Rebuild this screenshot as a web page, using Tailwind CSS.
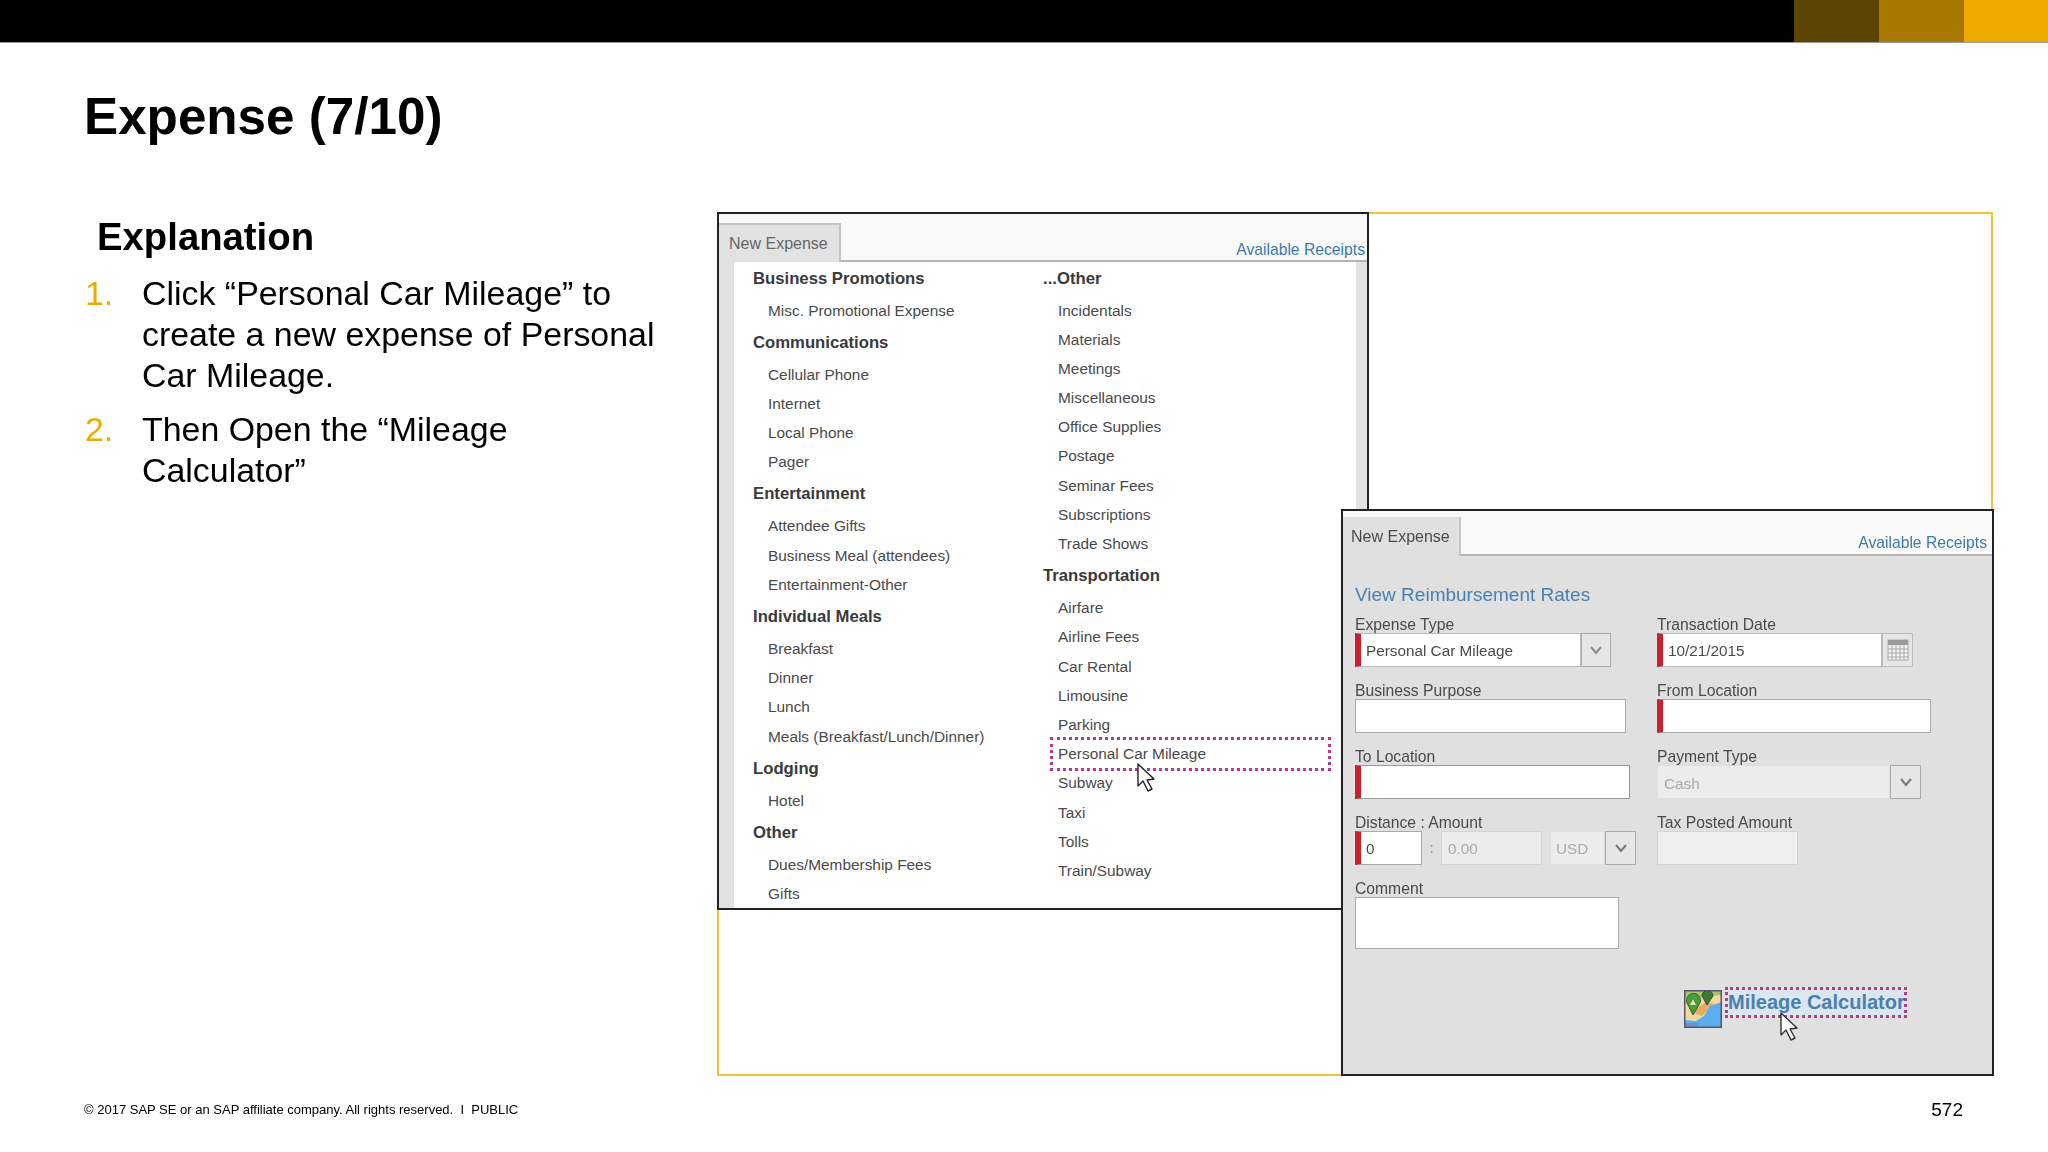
<!DOCTYPE html>
<html lang="en">
<head>
  <meta charset="UTF-8" />
  <title>Expense (7/10)</title>
  <script src="https://cdn.jsdelivr.net/npm/@tailwindcss/browser@4"></script>
</head>
<body class="w-[2048px] h-[1152px] overflow-hidden bg-white text-black font-['Liberation_Sans',Arial,sans-serif]">
  <div class="relative flex flex-col h-full blur-[0.4px]">
    <!-- top colour bar -->
    <div class="flex h-[43px] shrink-0 border-b border-[#999]">
      <div class="flex-1 bg-black"></div>
      <div class="w-[85px] bg-[#5c4500]"></div>
      <div class="w-[85px] bg-[#a87800]"></div>
      <div class="w-[84px] bg-[#f0ab00]"></div>
    </div>

    <h1 class="mt-[46px] pl-[84px] text-[51.2px] leading-[56px] font-bold">Expense (7/10)</h1>

    <h2 class="mt-[70px] pl-[97px] text-[38.3px] leading-[44px] font-bold">Explanation</h2>

    <ol class="mt-[14px] pl-[85px] w-[680px] text-[33.9px] leading-[41px] flex flex-col gap-[13px]">
      <li class="flex"><span class="w-[57px] shrink-0 text-[#f0ab00]">1.</span><span>Click “Personal Car Mileage” to create a new expense of Personal Car Mileage.</span></li>
      <li class="flex"><span class="w-[57px] shrink-0 text-[#f0ab00]">2.</span><span class="w-[440px]">Then Open the “Mileage Calculator”</span></li>
    </ol>

    <footer class="mt-auto pb-[32px] pl-[84px] pr-[85px] flex justify-between items-start leading-[20px]">
      <p class="text-[13px] whitespace-pre">© 2017 SAP SE or an SAP affiliate company. All rights reserved.  I  PUBLIC</p>
      <p class="text-[19px]">572</p>
    </footer>

    <!-- yellow picture frame with the two screenshots on top -->
    <div class="absolute left-[717px] top-[212px] w-[1276px] h-[864px] border-2 border-[#f0c040] blur-[0.3px]">
      <!-- list of expense types -->
      <div class="absolute -left-[2px] -top-[2px] w-[652px] h-[698px] border-2 border-[#222] bg-white overflow-hidden flex flex-col text-[15.4px] text-[#4a4a4a]">
        <div class="flex justify-between h-[48px] shrink-0 bg-[#f9f9f9] border-b-2 border-[#b5b5b5]">
          <div class="mt-[9px] w-[122px] h-[39px] pl-[10px] text-[16px] leading-[37px] bg-[#e2e2e2] border-t-2 border-r-2 border-[#c4c4c4] text-[#666]">New Expense</div>
          <div class="mt-[24px] pr-[2px] text-[15.7px] text-[#3d7ab0]">Available Receipts</div>
        </div>
        <div class="flex flex-1 min-h-0 bg-[#e2e2e2] pl-[15px] pr-[11px]">
          <div class="flex-1 bg-white flex pl-[19px] [&_h4]:h-[35px] [&_h4]:leading-[35px] [&_h4]:text-[16.7px] [&_h4]:font-bold [&_h4]:text-[#3a3a3a] [&_p]:h-[29.2px] [&_p]:leading-[29.2px] [&_p]:pl-[15px]">
            <div class="w-[290px] -mt-[1.5px]">
              <h4>Business Promotions</h4>
              <p>Misc. Promotional Expense</p>
              <h4>Communications</h4>
              <p>Cellular Phone</p>
              <p>Internet</p>
              <p>Local Phone</p>
              <p>Pager</p>
              <h4>Entertainment</h4>
              <p>Attendee Gifts</p>
              <p>Business Meal (attendees)</p>
              <p>Entertainment-Other</p>
              <h4>Individual Meals</h4>
              <p>Breakfast</p>
              <p>Dinner</p>
              <p>Lunch</p>
              <p>Meals (Breakfast/Lunch/Dinner)</p>
              <h4>Lodging</h4>
              <p>Hotel</p>
              <h4>Other</h4>
              <p>Dues/Membership Fees</p>
              <p>Gifts</p>
            </div>
            <div class="-mt-[1.5px]">
              <h4>...Other</h4>
              <p>Incidentals</p>
              <p>Materials</p>
              <p>Meetings</p>
              <p>Miscellaneous</p>
              <p>Office Supplies</p>
              <p>Postage</p>
              <p>Seminar Fees</p>
              <p>Subscriptions</p>
              <p>Trade Shows</p>
              <h4>Transportation</h4>
              <p>Airfare</p>
              <p>Airline Fees</p>
              <p>Car Rental</p>
              <p>Limousine</p>
              <p>Parking</p>
              <p>Personal Car Mileage</p>
              <p>Subway</p>
              <p>Taxi</p>
              <p>Tolls</p>
              <p>Train/Subway</p>
            </div>
          </div>
        </div>
        <!-- click marker -->
        <div class="absolute left-[331px] top-[523px] w-[281px] h-[34px] border-[3px] border-dotted border-[#b03a9c]"></div>
        <svg class="absolute left-[418px] top-[549px]" width="18" height="30" viewBox="0 0 18 30">
          <path d="M1 1 L1 23 L6 18 L11 28 L15 26 L10 17 L17 16 Z" fill="#fff" stroke="#222" stroke-width="1.4" stroke-linejoin="round"/>
        </svg>
      </div>

      <!-- new expense form -->
      <div class="absolute left-[622px] top-[295px] w-[653px] h-[567px] border-2 border-[#222] bg-[#e0e0e0] overflow-hidden text-[15.3px] text-[#4a4a4a]">
        <div class="flex justify-between h-[45px] bg-[#f9f9f9] border-b-2 border-[#b5b5b5]">
          <div class="mt-[6px] w-[118px] h-[39px] pl-[8px] text-[16px] leading-[39px] bg-[#e0e0e0] border-r-2 border-[#c4c4c4]">New Expense</div>
          <div class="mt-[23px] pr-[5px] text-[15.7px] text-[#3d7ab0] leading-[18px]">Available Receipts</div>
        </div>

        <div class="pl-[12px]">
          <p class="mt-[27px] h-[24px] leading-[24px] text-[19px] text-[#4a80b0]">View Reimbursement Rates</p>

          <div class="mt-[9px] grid grid-cols-[302px_1fr] gap-y-[15px] [&_label]:block [&_label]:h-[17px] [&_label]:leading-[17px] [&_label]:text-[15.7px]">
            <div>
              <label>Expense Type</label>
              <div class="flex h-[34px]">
                <div class="w-[226px] pl-[5px] leading-[34px] bg-white border border-[#bbb] border-l-[6px] border-l-[#c8202f]">Personal Car Mileage</div>
                <div class="w-[30px] flex items-center justify-center bg-[#e6e6e6] border border-[#aaa]">
                  <svg width="14" height="10" viewBox="0 0 14 10"><path d="M2 2 L7 8 L12 2" fill="none" stroke="#888" stroke-width="2"/></svg>
                </div>
              </div>
            </div>
            <div>
              <label>Transaction Date</label>
              <div class="flex h-[34px]">
                <div class="w-[225px] pl-[5px] leading-[34px] bg-white border border-[#bbb] border-l-[6px] border-l-[#c8202f]">10/21/2015</div>
                <div class="w-[31px] flex items-center justify-center bg-[#e6e6e6] border border-[#bbb]">
                  <svg width="22" height="22" viewBox="0 0 22 22">
                    <rect x="1" y="1" width="20" height="20" fill="#f2f2f2" stroke="#aaa"/>
                    <rect x="1" y="1" width="20" height="5" fill="#9a9a9a"/>
                    <path d="M1 10 H21 M1 14 H21 M1 18 H21 M5 6 V21 M9 6 V21 M13 6 V21 M17 6 V21" stroke="#aaa" stroke-width="1"/>
                  </svg>
                </div>
              </div>
            </div>

            <div>
              <label>Business Purpose</label>
              <div class="w-[271px] h-[34px] bg-white border border-[#aaa]"></div>
            </div>
            <div>
              <label>From Location</label>
              <div class="w-[274px] h-[34px] bg-white border border-[#aaa] border-l-[6px] border-l-[#c8202f]"></div>
            </div>

            <div>
              <label>To Location</label>
              <div class="w-[275px] h-[34px] bg-white border border-[#999] border-l-[6px] border-l-[#c8202f]"></div>
            </div>
            <div>
              <label>Payment Type</label>
              <div class="flex h-[34px]">
                <div class="w-[233px] pl-[6px] leading-[35px] bg-[#ececec] border border-[#ddd] text-[#aaa]">Cash</div>
                <div class="w-[31px] flex items-center justify-center bg-[#e6e6e6] border border-[#aaa]">
                  <svg width="14" height="10" viewBox="0 0 14 10"><path d="M2 2 L7 8 L12 2" fill="none" stroke="#777" stroke-width="2"/></svg>
                </div>
              </div>
            </div>

            <div>
              <label>Distance : Amount</label>
              <div class="flex items-center h-[34px]">
                <div class="w-[67px] h-[34px] pl-[5px] leading-[34px] bg-white border border-[#aaa] border-l-[6px] border-l-[#c8202f]">0</div>
                <div class="w-[19px] text-center text-[#888]">:</div>
                <div class="w-[101px] h-[34px] pl-[6px] leading-[34px] bg-[#ececec] border border-[#d4d4d4] text-[#aaa]">0.00</div>
                <div class="ml-[8px] w-[55px] h-[34px] pl-[5px] leading-[34px] bg-[#ececec] border border-[#ddd] text-[#aaa]">USD</div>
                <div class="w-[31px] h-[34px] flex items-center justify-center bg-[#e6e6e6] border border-[#aaa]">
                  <svg width="14" height="10" viewBox="0 0 14 10"><path d="M2 2 L7 8 L12 2" fill="none" stroke="#777" stroke-width="2"/></svg>
                </div>
              </div>
            </div>
            <div>
              <label>Tax Posted Amount</label>
              <div class="w-[141px] h-[34px] bg-[#efefef] border border-[#d4d4d4]"></div>
            </div>

            <div>
              <label>Comment</label>
              <div class="w-[264px] h-[52px] bg-white border border-[#aaa]"></div>
            </div>
          </div>
        </div>

        <!-- mileage calculator link -->
        <svg class="absolute left-[341px] top-[479px]" width="38" height="38" viewBox="0 0 38 38">
          <rect width="38" height="38" fill="#f2d9a0"/>
          <path d="M8 22 L22 12 L30 14 L18 26 Z" fill="#e8a860"/>
          <path d="M0 30 L12 31 L20 26 L26 16 L38 12 L38 38 L0 38 Z" fill="#5aaef0"/>
          <path d="M0 33 L16 33 L10 38 L0 38 Z" fill="#6f8fd0"/>
          <path d="M0 0 H38 V5 L20 7 L0 8 Z" fill="#a9c27a"/>
          <path d="M9 25 L3 13 A7 7 0 1 1 16 13 Z" fill="#4c9a3c" stroke="#2e6a28"/>
          <path d="M9 9 L6 15 H12 Z" fill="#d8e8b0"/>
          <path d="M23 15 L18 6 A5.5 5.5 0 1 1 29 6 Z" fill="#3d7a34" stroke="#2a5a26"/>
          <rect x=".75" y=".75" width="36.5" height="36.5" fill="none" stroke="#556" stroke-width="1.5"/>
        </svg>
        <div class="absolute left-[382px] top-[476px] w-[182px] h-[31px] border-[3px] border-dotted border-[#b0407f] bg-[#dce6ee] text-[20px] leading-[25px] font-bold text-[#4a80b0] whitespace-nowrap">Mileage Calculator</div>
        <svg class="absolute left-[437px] top-[501px]" width="18" height="30" viewBox="0 0 18 30">
          <path d="M1 1 L1 23 L6 18 L11 28 L15 26 L10 17 L17 16 Z" fill="#fff" stroke="#333" stroke-width="1.4" stroke-linejoin="round"/>
        </svg>
      </div>
    </div>
  </div>
</body>
</html>
